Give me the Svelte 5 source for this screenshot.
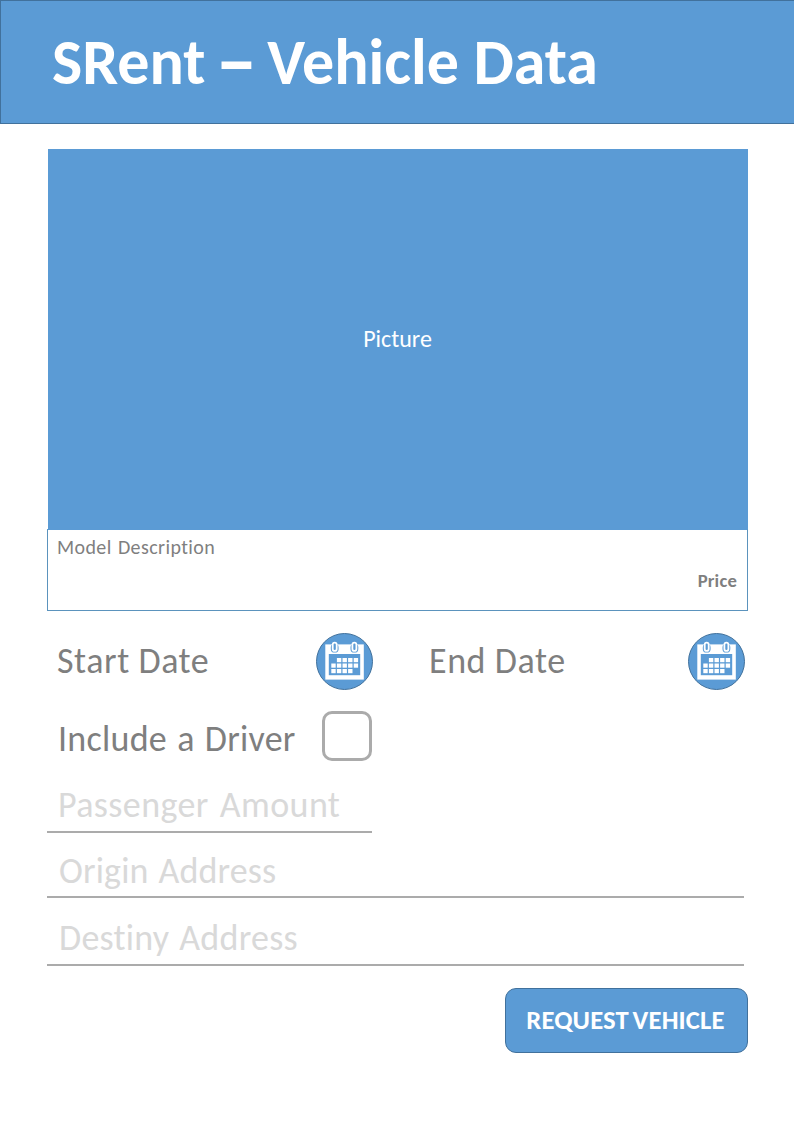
<script>
  const dates = ['Start Date', 'End Date'];
  const cells = [
    [1, 0], [2, 0], [3, 0], [4, 0],
    [0, 1], [1, 1], [2, 1], [3, 1], [4, 1],
    [0, 2], [1, 2], [2, 2], [3, 2]
  ];
</script>

<header>
  <h1><span>SRent</span> <span class="dash">–</span> <span>Vehicle Data</span></h1>
</header>

<main>
  <section class="vehicle">
    <div class="photo"><span>Picture</span></div>
    <div class="info">
      <span class="model">Model Description</span>
      <strong class="price">Price</strong>
    </div>
  </section>

  <div class="dates">
    {#each dates as label}
      <div class="date">
        <span class="label">{label}</span>
        <svg class="calendar" width="57" height="57" viewBox="0 0 57 57" role="img" aria-label={label}>
          <circle cx="28.5" cy="28.5" r="28" fill="#5b9bd5" stroke="#41719c" />
          <rect x="9.3" y="11.4" width="38.5" height="35.2" fill="#fff" />
          <rect x="12.8" y="21" width="31.4" height="21.2" fill="#5b9bd5" />
          {#each cells as [c, r]}
            <rect x={15.3 + c * 5.6} y={25 + r * 5.5} width="4.4" height="4.2" fill="#fff" />
          {/each}
          {#each [18.7, 38.4] as x}
            <rect x={x - 3.9} y="10.8" width="7.8" height="8.7" rx="3.6" fill="#5b9bd5" />
            <rect x={x - 2} y="9.6" width="4" height="8.3" rx="2" fill="#5b9bd5" stroke="#fff" stroke-width="1.8" />
          {/each}
        </svg>
      </div>
    {/each}
  </div>

  <div class="driver">
    <span class="label include">Include a Driver</span>
    <span class="checkbox" role="checkbox" aria-checked="false" aria-label="Include a Driver" tabindex="0"></span>
  </div>

  <div class="field passengers"><span>Passenger Amount</span></div>
  <div class="field origin"><span>Origin Address</span></div>
  <div class="field destiny"><span>Destiny Address</span></div>

  <button type="button"><span>REQUEST VEHICLE</span></button>
</main>

<style>
  :global(body) {
    background: #fff;
    font-family: Carlito, Lato, sans-serif;
    font-variant-ligatures: none;
  }
  header {
    box-sizing: border-box;
    height: 124px;
    display: flex;
    align-items: center;
    padding-left: 51px;
    background: #5b9bd5;
    border: 1px solid #41719c;
    border-right: 0;
  }
  h1 {
    display: flex;
    align-items: center;
    gap: 10px;
    margin: 0;
    color: #fff;
    font-size: 64px;
    line-height: 68px;
    font-weight: 700;
    white-space: nowrap;
  }
  .dash {
    padding-bottom: 2px;
    font-size: 84px;
  }
  main {
    display: flex;
    flex-direction: column;
    padding: 25px 46px 0 47px;
    white-space: nowrap;
  }
  .photo {
    height: 380px;
    margin-left: 1px;
    display: flex;
    align-items: center;
    justify-content: center;
    background: #5b9bd5;
    color: #fff;
    font-size: 24px;
  }
  .photo span {
    padding: 0 1px 2px 0;
  }
  .info {
    box-sizing: border-box;
    height: 82px;
    display: flex;
    flex-direction: column;
    padding: 5px 10px 0 9px;
    border: 1px solid #5b93bd;
    border-top-color: #5b9bd5;
    color: #7f7f7f;
  }
  .model {
    font-size: 20px;
    line-height: 24px;
    letter-spacing: 0.4px;
    word-spacing: 1.3px;
  }
  .price {
    align-self: flex-end;
    margin-top: 11px;
    font-size: 18.67px;
    line-height: 22px;
    letter-spacing: 0.2px;
  }
  .dates {
    display: grid;
    grid-template-columns: 326px 326px;
    column-gap: 46px;
    margin-top: 22px;
  }
  .date {
    height: 57px;
    display: flex;
    align-items: center;
    justify-content: space-between;
    padding-left: 10px;
  }
  .date .label {
    padding-bottom: 2px;
  }
  .calendar {
    display: block;
  }
  .label {
    color: #7f7f7f;
    font-size: 36px;
    line-height: 40px;
    letter-spacing: 0.55px;
  }
  .driver {
    width: 325px;
    height: 50px;
    margin-top: 21px;
    display: flex;
    align-items: center;
    justify-content: space-between;
    box-sizing: border-box;
    padding-left: 11px;
  }
  .include {
    padding-top: 5px;
    letter-spacing: 0.25px;
    word-spacing: 1.8px;
  }
  .checkbox {
    box-sizing: border-box;
    width: 50px;
    height: 50px;
    border: 3px solid #ababab;
    border-radius: 10px;
  }
  .field {
    box-sizing: border-box;
    width: 697px;
    display: flex;
    align-items: flex-end;
    padding: 0 0 6px 12px;
    border-bottom: 2px solid #ababab;
    color: #d9d9d9;
    font-size: 36px;
    line-height: 40px;
    letter-spacing: 0.25px;
    word-spacing: 1.5px;
  }
  .passengers {
    width: 325px;
    height: 72px;
    padding-left: 11px;
    letter-spacing: 0.4px;
    word-spacing: 2.5px;
  }
  .origin {
    height: 65px;
    padding-bottom: 5px;
    letter-spacing: 0.15px;
  }
  .destiny {
    height: 68px;
  }
  button {
    box-sizing: border-box;
    align-self: flex-end;
    width: 243px;
    height: 65px;
    margin-top: 22px;
    padding: 0 2px 2px 0;
    border: 1px solid #41719c;
    border-radius: 11px;
    background: #5b9bd5;
    color: #fff;
    font-family: inherit;
    font-size: 26.67px;
    font-weight: 700;
    letter-spacing: 0.15px;
    word-spacing: -2.5px;
  }
</style>
